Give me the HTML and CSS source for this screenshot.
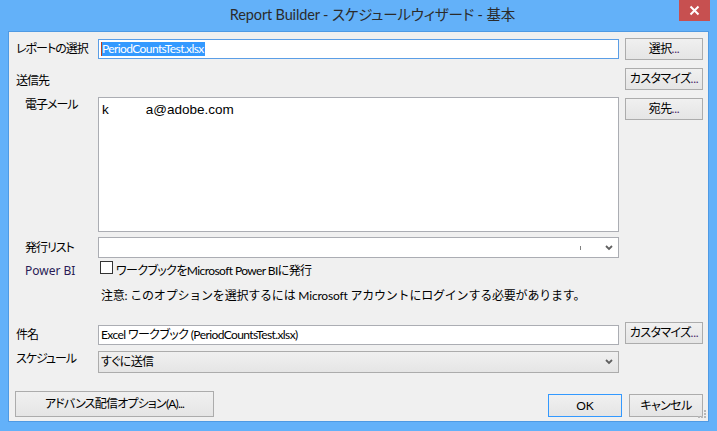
FILE: index.html
```html
<!DOCTYPE html>
<html lang="ja">
<head>
<meta charset="utf-8">
<title>Report Builder - スケジュールウィザード - 基本</title>
<link rel="stylesheet" href="styles.css">
</head>
<body>
<div class="window">
  <div class="titlebar">
    <div class="title">Report Builder - スケジュールウィザード - 基本</div>
    <div class="close">
      <svg width="31" height="21" viewBox="0 0 31 21"><path d="M11.5 6.5 L19.5 14.5 M19.5 6.5 L11.5 14.5" stroke="#fff" stroke-width="2" fill="none"/></svg>
    </div>
  </div>
  <div class="client">
    <div class="row r1">
      <div class="label">レポートの選択</div>
      <div class="field input focused"><span class="caret"></span><span class="sel">PeriodCountsTest.xlsx</span></div>
      <div class="btn side">選択<span class="dots">...</span></div>
    </div>
    <div class="row r2">
      <div class="label l-dest">送信先</div>
      <div class="field-space"></div>
      <div class="btn side">カスタマイズ<span class="dots">...</span></div>
    </div>
    <div class="row r3">
      <div class="label sub l-mail">電子メール</div>
      <div class="field textarea"><span class="mail">k</span><span class="mail mail-addr">a@adobe.com</span></div>
      <div class="btn side b-to">宛先<span class="dots">...</span></div>
    </div>
    <div class="row r4">
      <div class="label sub">発行リスト</div>
      <div class="field combo white">
        <span class="tick"></span>
        <svg class="chev" width="8" height="6" viewBox="0 0 8 6"><path d="M1 1 L4 4 L7 1" stroke="#606060" stroke-width="1.8" fill="none"/></svg>
      </div>
    </div>
    <div class="row r5">
      <div class="label sub pbi">Power BI</div>
      <div class="checkline"><span class="checkbox"></span><span class="checktext">ワークブックをMicrosoft Power BIに発行</span></div>
    </div>
    <div class="row r6">
      <div class="label"></div>
      <div class="note">注意: このオプションを選択するには Microsoft アカウントにログインする必要があります。</div>
    </div>
    <div class="row r7">
      <div class="label l-subj">件名</div>
      <div class="field input subj">Excel ワークブック (PeriodCountsTest.xlsx)</div>
      <div class="btn side">カスタマイズ<span class="dots">...</span></div>
    </div>
    <div class="row r8">
      <div class="label l-sched">スケジュール</div>
      <div class="field combo gray">
        <span class="combo-text">すぐに送信</span>
        <svg class="chev" width="8" height="6" viewBox="0 0 8 6"><path d="M1 1 L4 4 L7 1" stroke="#606060" stroke-width="1.8" fill="none"/></svg>
      </div>
    </div>
    <div class="row r9">
      <div class="btn adv">アドバンス配信オプション(A)...</div>
      <div class="btn ok">OK</div>
      <div class="btn cancel">キャンセル</div>
    </div>
    <svg class="grip" width="10" height="10" viewBox="0 0 10 10">
      <g fill="#b8b8b8">
        <rect x="7" y="0" width="2" height="2"/>
        <rect x="7" y="3" width="2" height="2"/>
        <rect x="7" y="6" width="2" height="2"/>
        <rect x="4" y="6" width="2" height="2"/>
        <rect x="1" y="6" width="2" height="2"/>
      </g>
    </svg>
  </div>
</div>
</body>
</html>
```

FILE: styles.css
```css
* { box-sizing: border-box; }
html, body {
  margin: 0;
  padding: 0;
  width: 717px;
  height: 431px;
  overflow: hidden;
  background: #63b1f9;
}
body {
  font-family: Lato, "Noto Sans CJK JP", sans-serif;
  font-size: 12px;
  font-feature-settings: "palt";
  color: #000;
}
.window {
  width: 717px;
  height: 431px;
  display: flex;
  flex-direction: column;
  background: #63b1f9;
}
.titlebar {
  height: 31px;
  display: flex;
  flex-shrink: 0;
}
.title {
  flex: 1;
  text-align: center;
  padding-left: 66px;
  font-size: 14.5px;
  letter-spacing: -0.15px;
  line-height: 30px;
  color: #2b2b2b;
}
.close {
  width: 31px;
  height: 21px;
  margin-right: 7px;
  background: #c75050;
  display: flex;
}
.client {
  position: relative;
  margin: 0 8px 9px 8px;
  height: 391px;
  background: #f0f0f0;
  border: 1px solid #4f9ae3;
  padding: 6px 5px 0 7px;
  display: flex;
  flex-direction: column;
}
.row {
  display: flex;
  flex-shrink: 0;
}
.label {
  width: 82px;
  flex-shrink: 0;
  white-space: nowrap;
  line-height: 16px;
  letter-spacing: -1px;
}
.label.sub { padding-left: 9px; }
.field {
  width: 521px;
  flex-shrink: 0;
  border: 1px solid #abadb3;
  background: #fff;
}
.field-space { width: 521px; flex-shrink: 0; }
.btn {
  border: 1px solid #acacac;
  background: linear-gradient(#f0f0f0, #e5e5e5);
  display: flex;
  align-items: center;
  justify-content: center;
  white-space: nowrap;
  line-height: 16px;
  letter-spacing: -0.6px;
}
.btn .dots { color: #4a2a6a; letter-spacing: -0.3px; }
.btn.side {
  width: 78px;
  height: 22px;
  margin-left: 6px;
}

/* row 1 */
.r1 { height: 22px; align-items: center; }
.input {
  height: 20px;
  display: flex;
  align-items: center;
  padding-left: 2px;
  line-height: 16px;
  white-space: nowrap;
  letter-spacing: -0.6px;
}
.input.focused { border-color: #5b9ee6; }
.caret {
  width: 1px;
  height: 14px;
  background: #c04020;
}
.sel {
  background: #3399ff;
  color: #fff;
  line-height: 14px;
  height: 14px;
  padding-right: 1px;
}

/* row 2 */
.r2 { height: 22px; margin-top: 8px; align-items: flex-start; }
.l-dest { margin-top: 5px; }

/* row 3 */
.r3 { height: 135px; margin-top: 7px; align-items: flex-start; }
.l-mail { margin-top: 0; }
.textarea {
  height: 135px;
  padding: 3px 0 0 3px;
}
.mail {
  font-family: "Liberation Sans", Arial, sans-serif;
  font-size: 13.5px;
  line-height: 18px;
  font-feature-settings: normal;
}
.mail-addr { margin-left: 37px; }
.b-to { margin-top: 1px; }

/* row 4 */
.r4 { height: 21px; margin-top: 5px; align-items: center; }
.combo {
  height: 21px;
  display: flex;
  align-items: center;
  position: relative;
}
.combo.white { justify-content: flex-end; }
.tick {
  width: 1px;
  height: 4px;
  background: #808080;
  margin-right: 24px;
}
.chev { margin-right: 5px; flex-shrink: 0; }

/* row 5 */
.r5 { height: 20px; margin-top: 3px; align-items: flex-start; }
.pbi {
  line-height: 20px;
  color: #2a1b55;
  font-family: "Noto Sans", "Noto Sans CJK JP", sans-serif;
  font-feature-settings: normal;
  letter-spacing: 0;
}
.checkline {
  display: flex;
  align-items: flex-start;
  padding-left: 2px;
}
.checkbox {
  width: 13px;
  height: 13px;
  border: 1px solid #333;
  background: #fff;
  flex-shrink: 0;
}
.checktext {
  margin-left: 3px;
  line-height: 20px;
  white-space: nowrap;
  letter-spacing: -0.6px;
}

/* row 6 */
.r6 { height: 20px; margin-top: 5px; }
.note {
  line-height: 20px;
  padding-left: 3px;
  white-space: nowrap;
  font-feature-settings: normal;
  letter-spacing: -0.2px;
}

/* row 7 */
.r7 { height: 23px; margin-top: 16px; align-items: flex-start; }
.l-subj { line-height: 20px; margin-top: 3px; }
.subj { margin-top: 3px; }

/* row 8 */
.r8 { height: 22px; margin-top: 6px; align-items: flex-start; }
.combo.gray {
  height: 22px;
  border-color: #acacac;
  background: linear-gradient(#f0f0f0, #e5e5e5);
  justify-content: space-between;
  padding-left: 2px;
}
.combo-text { line-height: 16px; letter-spacing: -0.6px; }

/* row 9 */
.r9 { height: 26px; margin-top: 18px; align-items: flex-start; }
.adv {
  width: 199px;
  height: 26px;
  margin-left: -1px;
  letter-spacing: -0.8px;
}
.ok {
  width: 74px;
  height: 23px;
  margin-top: 3px;
  margin-left: auto;
  border-color: #3399ff;
  letter-spacing: 0;
}
.cancel {
  width: 74px;
  height: 23px;
  margin-top: 3px;
  margin-left: 7px;
}
.grip {
  position: absolute;
  right: 1px;
  bottom: 1px;
}
```
